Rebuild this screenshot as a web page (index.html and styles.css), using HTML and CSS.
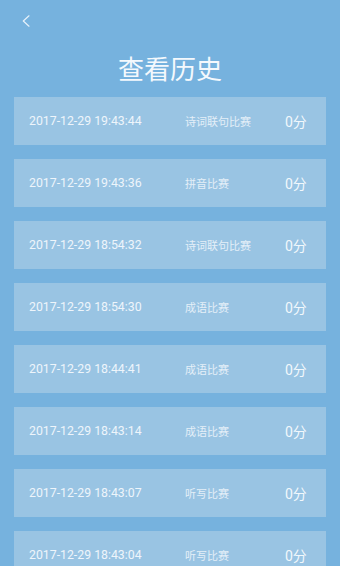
FILE: index.html
```html
<!DOCTYPE html>
<html lang="zh">
<head>
<meta charset="utf-8">
<link rel="stylesheet" href="styles.css">
</head>
<body>
<div class="top">
  <svg class="back" width="8" height="12" viewBox="0 0 8 12"><path d="M7 0.8 L1.3 6 L7 11.2" fill="none" stroke="#e6f1fa" stroke-width="1.2" stroke-linecap="round" stroke-linejoin="round"/></svg>
</div>
<h1 class="title">查看历史</h1>
<div class="list">
  <div class="card"><span class="date">2017-12-29 19:43:44</span><span class="game">诗词联句比赛</span><span class="score">0分</span></div>
  <div class="card"><span class="date">2017-12-29 19:43:36</span><span class="game">拼音比赛</span><span class="score">0分</span></div>
  <div class="card"><span class="date">2017-12-29 18:54:32</span><span class="game">诗词联句比赛</span><span class="score">0分</span></div>
  <div class="card"><span class="date">2017-12-29 18:54:30</span><span class="game">成语比赛</span><span class="score">0分</span></div>
  <div class="card"><span class="date">2017-12-29 18:44:41</span><span class="game">成语比赛</span><span class="score">0分</span></div>
  <div class="card"><span class="date">2017-12-29 18:43:14</span><span class="game">成语比赛</span><span class="score">0分</span></div>
  <div class="card"><span class="date">2017-12-29 18:43:07</span><span class="game">听写比赛</span><span class="score">0分</span></div>
  <div class="card"><span class="date">2017-12-29 18:43:04</span><span class="game">听写比赛</span><span class="score">0分</span></div>
</div>
</body>
</html>
```
FILE: styles.css
```css
html, body {
  margin: 0;
  padding: 0;
  background: #76b2de;
}
body {
  font-family: Roboto, "Noto Sans CJK SC", sans-serif;
  color: #eef5fb;
  overflow: hidden;
  height: 566px;
}
.top {
  height: 42px;
  display: flex;
  align-items: center;
  padding-left: 22px;
}
.back {
  display: block;
}
.title {
  margin: 8px 0 11px;
  font-family: "Noto Sans CJK SC", sans-serif;
  font-weight: 400;
  font-size: 26px;
  line-height: 36px;
  text-align: center;
  color: #f4f9fd;
}
.list {
  display: flex;
  flex-direction: column;
  gap: 14px;
  padding: 0 14px;
}
.card {
  height: 48px;
  flex: none;
  background: #99c4e3;
  display: grid;
  grid-template-columns: 156px 100px 1fr;
  align-items: center;
  padding-left: 15px;
}
.date {
  font-size: 12.3px;
  color: #eef5fb;
}
.game {
  font-family: "Noto Sans CJK SC", sans-serif;
  font-size: 11px;
  color: #e4eff8;
}
.score {
  font-size: 14px;
  color: #f2f8fc;
}
```
